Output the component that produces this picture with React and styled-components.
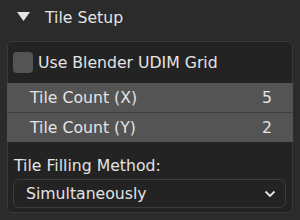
import React from "react"
import styled, { createGlobalStyle } from "styled-components"

const GlobalStyle = createGlobalStyle`
  html, body {
    margin: 0;
    padding: 0;
    background: #2b2b2b;
  }
  body {
    font-family: "DejaVu Sans", "Liberation Sans", sans-serif;
    color: #e4e4e4;
    font-size: 15.7px;
  }
`

const Wrap = styled.div`
  width: 300px;
  height: 220px;
  box-sizing: border-box;
  padding: 0 7px;
  display: flex;
  flex-direction: column;
`

const Header = styled.div`
  height: 41px;
  display: flex;
  align-items: center;
  padding: 0 0 7px 10px;
  box-sizing: border-box;
`

const Arrow = styled.svg`
  width: 13px;
  height: 10px;
  margin-right: 15px;
`

const Panel = styled.div`
  border: 1px solid #393939;
  border-radius: 5px;
  background: #232323;
  height: 172px;
  box-sizing: border-box;
  display: flex;
  flex-direction: column;
`

const CheckRow = styled.div`
  display: flex;
  align-items: center;
  height: 41px;
  padding-left: 5px;
`

const Box = styled.div`
  width: 20px;
  height: 21px;
  border-radius: 4px;
  background: #545454;
  margin-right: 5px;
`

const Field = styled.div`
  display: flex;
  align-items: center;
  justify-content: space-between;
  height: ${(p) => (p.divided ? "30px" : "29px")};
  margin: 0 -1px;
  padding: 0 21px 0 23px;
  background: #545454;
  border-top: ${(p) => (p.divided ? "1px solid #3e3e3e" : "none")};
  box-sizing: border-box;
`

const Label = styled.div`
  padding: 14px 0 0 6px;
  height: 37px;
  box-sizing: border-box;
`

const Select = styled.div`
  margin: 0 6px 0 5px;
  height: 29px;
  border: 1px solid #3c3c3c;
  border-radius: 6px;
  display: flex;
  align-items: center;
  justify-content: space-between;
  padding: 0 9px 0 12px;
  box-sizing: border-box;
`

export default function App() {
  return (
    <>
      <GlobalStyle />
      <Wrap>
        <Header>
          <Arrow viewBox="0 0 13 10">
            <polygon points="0,0 13,0 6.5,9" fill="#e4e4e4" />
          </Arrow>
          Tile Setup
        </Header>
        <Panel>
          <CheckRow>
            <Box />
            Use Blender UDIM Grid
          </CheckRow>
          <Field>
            <span>Tile Count (X)</span>
            <span>5</span>
          </Field>
          <Field divided>
            <span>Tile Count (Y)</span>
            <span>2</span>
          </Field>
          <Label>Tile Filling Method:</Label>
          <Select>
            <span>Simultaneously</span>
            <svg width="12" height="8" viewBox="0 0 12 8">
              <polyline
                points="1.5,1.5 6,6 10.5,1.5"
                fill="none"
                stroke="#e4e4e4"
                strokeWidth="1.8"
              />
            </svg>
          </Select>
        </Panel>
      </Wrap>
    </>
  )
}
